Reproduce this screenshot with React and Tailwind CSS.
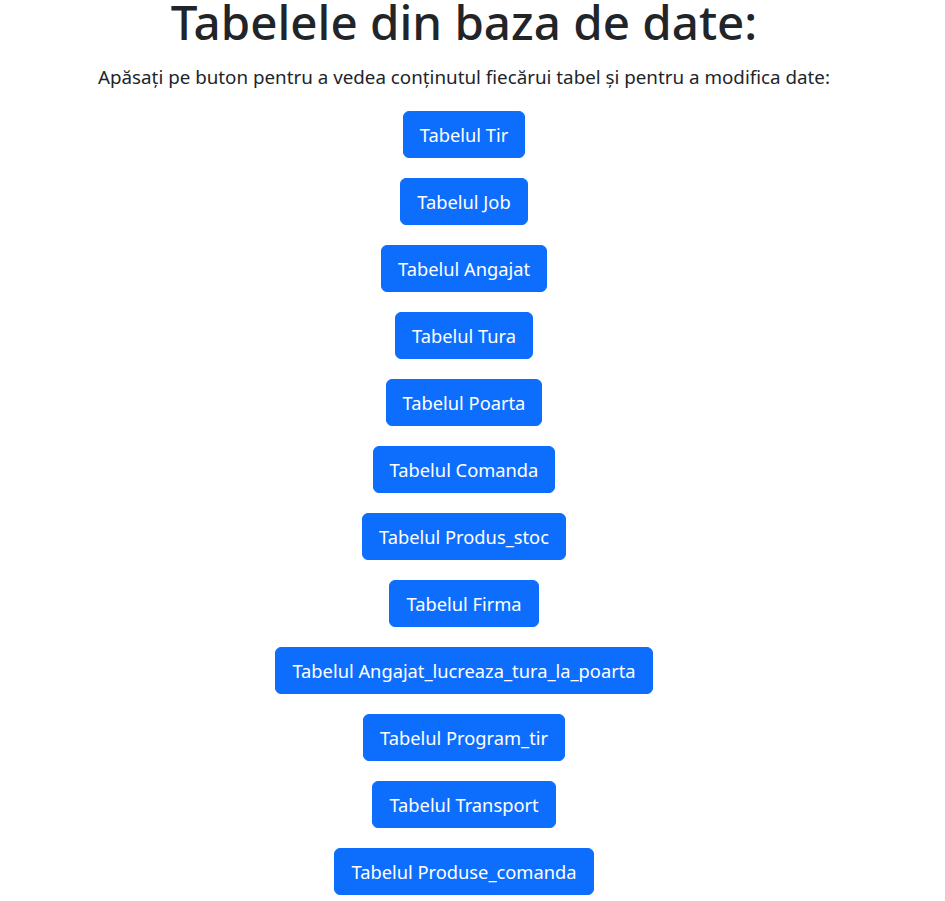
const tables = [
  'Tir',
  'Job',
  'Angajat',
  'Tura',
  'Poarta',
  'Comanda',
  'Produs_stoc',
  'Firma',
  'Angajat_lucreaza_tura_la_poarta',
  'Program_tir',
  'Transport',
  'Produse_comanda',
];

export default function App() {
  return (
    <div className="min-h-screen bg-white text-[#212529] text-center pr-[17px] font-['Noto_Sans',sans-serif]">
      <h1 className="text-[47.5px] font-medium leading-[44px] mb-[19px]">Tabelele din baza de date:</h1>
      <p className="text-[18.8px] font-normal leading-[28px] mb-[20px]">
        Apăsați pe buton pentru a vedea conținutul fiecărui tabel și pentru a modifica date:
      </p>
      <div className="flex flex-col items-center gap-[20px]">
        {tables.map((t) => (
          <button
            key={t}
            className="bg-[#0d6efd] text-white text-[18.3px] leading-[29px] px-4 py-2 rounded-[6px] border border-[#0d6efd]"
          >
            Tabelul {t}
          </button>
        ))}
      </div>
    </div>
  );
}
